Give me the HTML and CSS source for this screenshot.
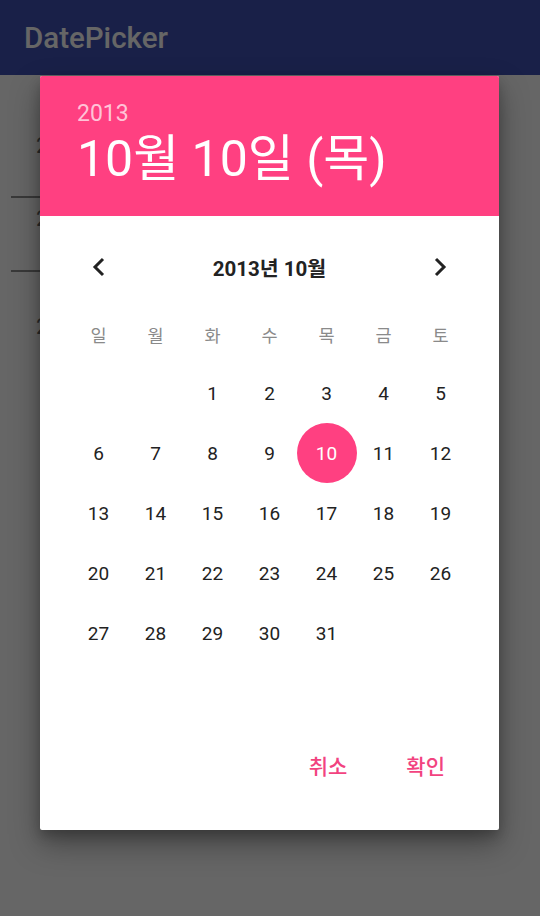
FILE: index.html
```html
<!DOCTYPE html>
<html lang="ko">
<head>
<meta charset="utf-8">
<title>DatePicker</title>
<link rel="stylesheet" href="styles.css">
</head>
<body>
<header class="appbar"><span class="appbar-title">DatePicker</span></header>
<main class="content">
  <div class="field"><span class="field-text">20</span></div>
  <div class="field field-second"><span class="field-text">20</span></div>
  <div class="plain"><span class="field-text">20</span></div>
</main>

<div class="scrim">
  <div class="dialog">
    <div class="dlg-header">
      <div class="dlg-year">2013</div>
      <div class="dlg-date">10월 10일 (목)</div>
    </div>
    <div class="dlg-body">
      <div class="month-nav">
        <span class="nav-btn">
          <svg width="14" height="20" viewBox="0 0 14 20"><path d="M11 2 L3 10 L11 18" fill="none" stroke="#222" stroke-width="3"/></svg>
        </span>
        <span class="month-title">2013년 10월</span>
        <span class="nav-btn">
          <svg width="14" height="20" viewBox="0 0 14 20"><path d="M3 2 L11 10 L3 18" fill="none" stroke="#222" stroke-width="3"/></svg>
        </span>
      </div>
      <div class="weekdays">
        <span>일</span><span>월</span><span>화</span><span>수</span><span>목</span><span>금</span><span>토</span>
      </div>
      <div class="days">
        <span class="day"></span><span class="day"></span>
        <span class="day">1</span><span class="day">2</span><span class="day">3</span><span class="day">4</span><span class="day">5</span>
        <span class="day">6</span><span class="day">7</span><span class="day">8</span><span class="day">9</span><span class="day"><span class="sel">10</span></span><span class="day">11</span><span class="day">12</span>
        <span class="day">13</span><span class="day">14</span><span class="day">15</span><span class="day">16</span><span class="day">17</span><span class="day">18</span><span class="day">19</span>
        <span class="day">20</span><span class="day">21</span><span class="day">22</span><span class="day">23</span><span class="day">24</span><span class="day">25</span><span class="day">26</span>
        <span class="day">27</span><span class="day">28</span><span class="day">29</span><span class="day">30</span><span class="day">31</span>
      </div>
      <div class="actions">
        <span class="btn btn-cancel">취소</span>
        <span class="btn">확인</span>
      </div>
    </div>
  </div>
</div>
</body>
</html>
```

FILE: styles.css
```css
* { box-sizing: border-box; }
html, body { margin: 0; padding: 0; }
body {
  width: 540px;
  height: 916px;
  overflow: hidden;
  background: #ffffff;
  font-family: Roboto, "Noto Sans CJK KR", sans-serif;
  position: relative;
}
.appbar {
  height: 75px;
  background: #3f51b5;
  display: flex;
  align-items: center;
  padding-left: 24px;
}
.appbar-title {
  color: #ffffff;
  font-size: 29.5px;
  font-weight: 500;
}
.content {
  padding: 50px 0 0 11px;
}
.field {
  width: 200px;
  height: 73px;
  border-bottom: 2px solid #8e8e8e;
  display: flex;
  align-items: flex-start;
}
.field-second { height: 74px; }
.field-text {
  margin-left: 25px;
  font-size: 22px;
  color: #6a6a6a;
}
.field .field-text { margin-top: 8px; }
.plain { padding-top: 42px; }

.scrim {
  position: absolute;
  inset: 0;
  background: rgba(0, 0, 0, 0.6);
  padding-top: 76px;
  padding-left: 40px;
}
.dialog {
  width: 459px;
  height: 754px;
  background: #ffffff;
  border-radius: 2px;
  overflow: hidden;
  box-shadow: 0 14px 30px rgba(0, 0, 0, 0.35), 0 6px 12px rgba(0, 0, 0, 0.2);
  display: flex;
  flex-direction: column;
}
.dlg-header {
  height: 140px;
  background: #ff4081;
  padding: 25px 0 0 37px;
  color: #ffffff;
}
.dlg-year {
  font-size: 23px;
  line-height: 26px;
  color: rgba(255, 255, 255, 0.7);
}
.dlg-date {
  font-size: 50px;
  line-height: 60px;
  margin-top: 2px;
}
.dlg-body {
  flex: 1;
  display: flex;
  flex-direction: column;
  padding: 27px 30px 0 30px;
}
.month-nav {
  height: 48px;
  display: flex;
  align-items: center;
  justify-content: space-between;
}
.nav-btn {
  width: 57px;
  display: flex;
  justify-content: center;
  align-items: center;
}
.month-title {
  font-size: 20.5px;
  font-weight: 700;
  color: #222222;
}
.weekdays {
  margin-top: 28px;
  height: 30px;
  display: grid;
  grid-template-columns: repeat(7, 57px);
  align-items: center;
  justify-items: center;
  font-size: 17.5px;
  color: #8a8a8a;
}
.days {
  margin-top: 14px;
  display: grid;
  grid-template-columns: repeat(7, 57px);
  grid-auto-rows: 60px;
  height: 360px;
  align-content: start;
}
.day {
  display: flex;
  align-items: center;
  justify-content: center;
  font-size: 19px;
  color: #222222;
}
.sel {
  flex: none;
  width: 60px;
  height: 60px;
  border-radius: 50%;
  background: #ff4081;
  color: #ffffff;
  display: flex;
  align-items: center;
  justify-content: center;
}
.actions {
  margin-top: 24px;
  height: 36px;
  display: flex;
  justify-content: flex-end;
  align-items: center;
  padding-right: 24px;
}
.btn {
  font-size: 21px;
  font-weight: 500;
  color: #f2437f;
}
.btn-cancel { margin-right: 59px; }
```
